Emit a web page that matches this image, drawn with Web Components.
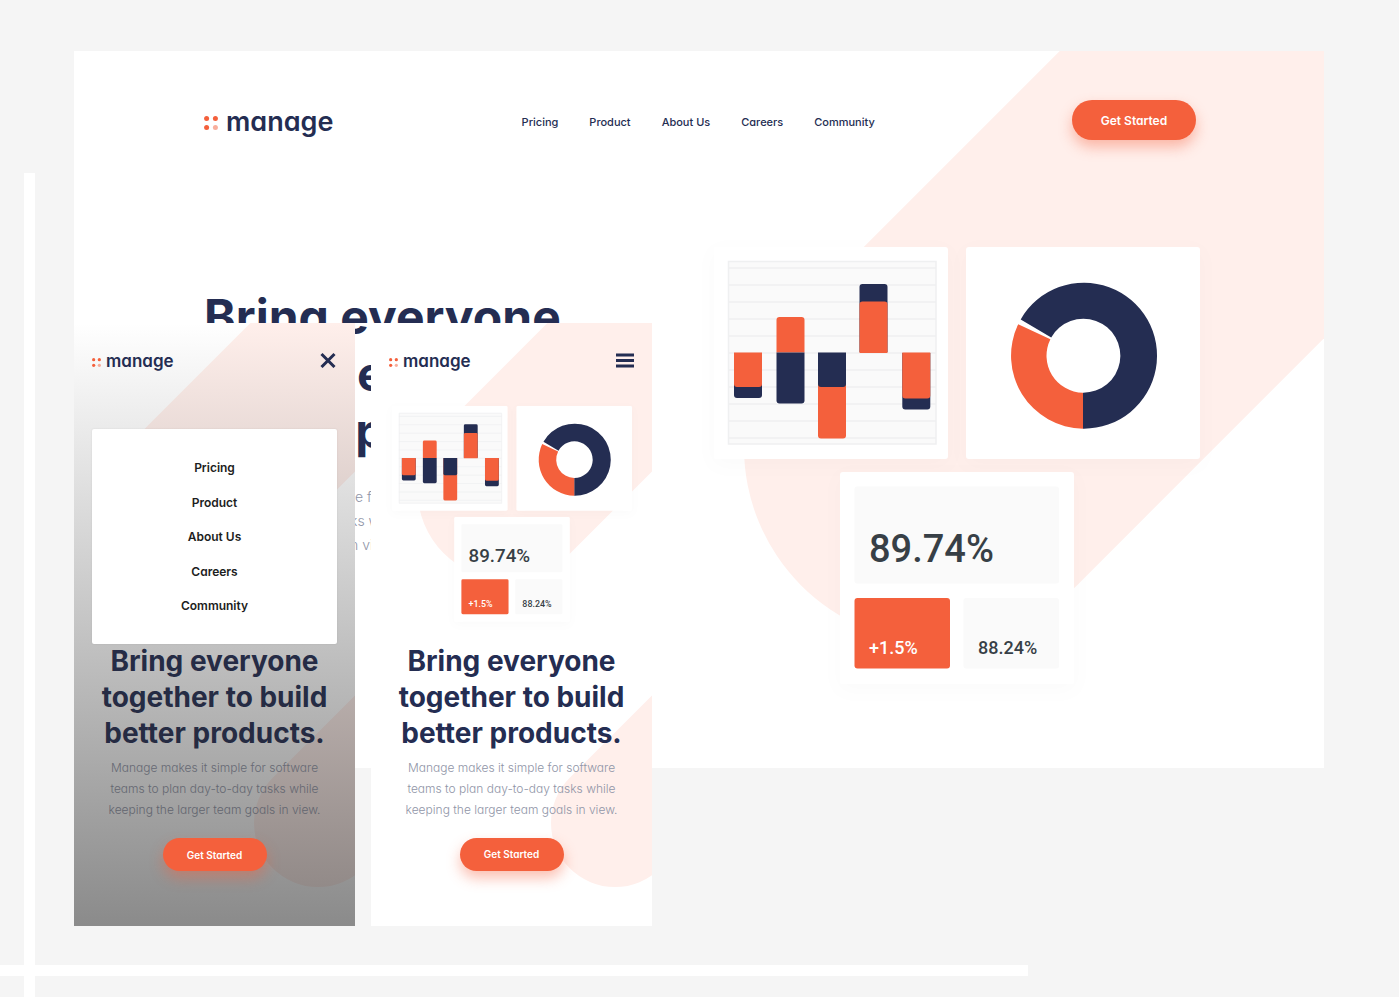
<!DOCTYPE html>
<html lang="en">
<head>
<meta charset="utf-8">
<meta name="viewport" content="width=device-width, initial-scale=1">
<title>Manage landing page showcase</title>
<style>
  body {
    margin: 0;
    background: #f5f5f5;
    color: #242d52;
    font-family: Inter, "Open Sans", sans-serif;
    font-feature-settings: "cv11" 1;
    --orange: #f4603c;
    --navy: #242d52;
    --blush: #ffefeb;
  }
</style>
</head>
<body>
<showcase-stage>
  <desktop-preview slot="desktop">
    <manage-logo></manage-logo>
    <site-nav slot="nav"></site-nav>
    <cta-button slot="action">Get Started</cta-button>
    <span slot="title">Bring everyone together to build better products.</span>
    <span slot="copy">Manage makes it simple for software teams<br>to plan day-to-day tasks while keeping<br>the larger team goals in view.</span>
  </desktop-preview>
  <phone-preview slot="phones" menu>
    <site-nav slot="feature" stacked></site-nav>
    <span slot="title">Bring everyone together to build better products.</span>
    <span slot="copy">Manage makes it simple for software teams to plan day-to-day tasks while keeping the larger team goals in view.</span>
  </phone-preview>
  <phone-preview slot="phones">
    <hero-illustration slot="feature"></hero-illustration>
    <span slot="title">Bring everyone together to build better products.</span>
    <span slot="copy">Manage makes it simple for software teams to plan day-to-day tasks while keeping the larger team goals in view.</span>
  </phone-preview>
</showcase-stage>

<script>
const define = (name, html) => {
  const template = document.createElement('template');
  template.innerHTML = html;
  customElements.define(name, class extends HTMLElement {
    constructor() {
      super();
      this.attachShadow({ mode: 'open' }).append(template.content.cloneNode(true));
    }
  });
};

/* Page backdrop with two white rules; the phones overlap the desktop window. */
define('showcase-stage', `
  <style>
    :host { display: grid; position: relative; isolation: isolate; box-sizing: border-box; min-height: 100vh; padding: 51px 75px 71px 74px; align-items: start; }
    .rule { position: absolute; z-index: -1; background: #fff; }
    .down { left: 24px; top: 173px; bottom: 0; width: 11px; }
    .across { left: 0; right: 371px; bottom: 21px; height: 11px; }
    .desktop, .phones { grid-area: 1 / 1; min-width: 0; }
    .phones { display: flex; gap: 16px; margin-top: 272px; justify-self: start; position: relative; }
  </style>
  <div class="rule down"></div>
  <div class="rule across"></div>
  <div class="desktop"><slot name="desktop"></slot></div>
  <div class="phones"><slot name="phones"></slot></div>`);

/* Wordmark with its four dots; --logo-size sets the text size. */
define('manage-logo', `
  <style>
    :host { display: inline-block; padding-top: 2px; }
    a { display: flex; align-items: center; gap: var(--logo-gap, 8px); color: var(--navy); text-decoration: none; font-size: var(--logo-size, 27px); line-height: 1; font-weight: 600; }
    svg { width: var(--logo-mark, 14px); height: var(--logo-mark, 14px); margin-top: 3px; fill: var(--orange); }
  </style>
  <a href="#" aria-label="manage">
    <svg viewBox="0 0 14 14" aria-hidden="true"><circle cx="2.6" cy="2.6" r="2.5"/><circle cx="11.4" cy="2.6" r="2.5"/><circle cx="2.6" cy="11.4" r="2.5"/><circle cx="11.4" cy="11.4" r="2.5" opacity=".5"/></svg>
    <span>manage</span>
  </a>`);

define('site-nav', `
  <style>
    :host { display: block; }
    ul { display: flex; gap: 31px; margin: 0; padding: 0; list-style: none; font-size: 11px; line-height: 20px; font-weight: 500; }
    a { color: var(--navy); text-decoration: none; }
    :host([stacked]) { background: #fff; border-radius: 2px; padding: 29px 0 28px; box-shadow: 0 0 2px rgba(0, 0, 0, .1); }
    :host([stacked]) ul { flex-direction: column; align-items: center; justify-content: space-between; height: 158px; gap: 0; font-size: 12px; font-weight: 600; }
    :host([stacked]) a { color: #1c1d21; }
  </style>
  <nav aria-label="Main">
    <ul>
      <li><a href="#">Pricing</a></li>
      <li><a href="#">Product</a></li>
      <li><a href="#">About Us</a></li>
      <li><a href="#">Careers</a></li>
      <li><a href="#">Community</a></li>
    </ul>
  </nav>`);

define('cta-button', `
  <style>
    :host { display: inline-block; }
    button { display: block; width: var(--cta-width, 124px); height: var(--cta-height, 40px); padding: 0; border: 0; border-radius: 20px; background: var(--orange); color: #fff; font: inherit; font-feature-settings: inherit; font-size: var(--cta-size, 12px); font-weight: 600; box-shadow: 0 7px 14px rgba(244, 96, 60, .4); cursor: pointer; }
  </style>
  <button type="button"><slot></slot></button>`);

/* Three dashboard cards: bar chart, donut and figures. */
define('hero-illustration', `
  <style>
    :host { display: block; }
    svg { display: block; width: 100%; height: auto; overflow: visible; font-family: Roboto, Inter, sans-serif; font-weight: 500; }
    .card { fill: #fff; filter: drop-shadow(0 5px 10px rgba(0, 0, 0, .02)); }
    .panel { fill: #fafafa; }
    .grid { fill: none; stroke: #eff0f1; stroke-width: 1.5; }
    .o { fill: var(--orange); }
    .n { fill: var(--navy); }
  </style>
  <svg viewBox="0 0 486 437" role="img" aria-label="Dashboard cards">
    <rect class="card" width="234" height="212" rx="3"/>
    <rect class="card" x="252" width="234" height="212" rx="3"/>
    <rect class="card" x="126" y="225" width="234" height="212" rx="3"/>

    <rect class="panel" x="14" y="14" width="208" height="183"/>
    <path class="grid" d="M14.5 14.5h207.500v182.500h-207.500zM14 21h208M14 38h208M14 55h208M14 72h208M14 89h208M14 106h208M14 123h208M14 140h208M14 157h208M14 174h208M14 191h208"/>
    <path class="n" d="M20 106h28v42a3 3 0 0 1-3 3h-22a3 3 0 0 1-3-3z"/>
    <path class="o" d="M20 105.500h28v31.500a3 3 0 0 1-3 3h-22a3 3 0 0 1-3-3z"/>
    <path class="o" d="M62.500 105.500v-32.500a3 3 0 0 1 3-3h22a3 3 0 0 1 3 3v32.500z"/>
    <path class="n" d="M62.500 105.500h28v48a3 3 0 0 1-3 3h-22a3 3 0 0 1-3-3z"/>
    <path class="o" d="M104 106h28v82.500a3 3 0 0 1-3 3h-22a3 3 0 0 1-3-3z"/>
    <path class="n" d="M104 105.500h28v31.500a3 3 0 0 1-3 3h-22a3 3 0 0 1-3-3z"/>
    <path class="n" d="M145.500 105v-65a3 3 0 0 1 3-3h22a3 3 0 0 1 3 3v65z"/>
    <path class="o" d="M145.500 106v-48.500a3 3 0 0 1 3-3h22a3 3 0 0 1 3 3v48.500z"/>
    <path class="n" d="M188.300 106h28v53.500a3 3 0 0 1-3 3h-22a3 3 0 0 1-3-3z"/>
    <path class="o" d="M188.300 105.500h28v43a3 3 0 0 1-3 3h-22a3 3 0 0 1-3-3z"/>

    <g transform="translate(369.700 108.700)">
      <path class="n" d="M-.7 73V37A37 37 0 1 0-32.500-18.300L-63-36.300A73 73 0 1 1-.7 73z"/>
      <path class="o" d="M-.7 73V37A37 37 0 0 1-33.300-16.500L-65.500-31.500A73 73 0 0 0-.7 73z"/>
    </g>

    <rect class="panel" x="140.500" y="239.500" width="204.500" height="97" rx="2.500"/>
    <rect class="o" x="140.500" y="351" width="95.500" height="70.500" rx="3"/>
    <rect class="panel" x="249.500" y="351" width="95.500" height="70.500" rx="2.500"/>
    <text x="155" y="315" font-size="38" fill="#373f46">89.74%</text>
    <text x="155" y="407" font-size="18" fill="#fff">+1.5%</text>
    <text x="264" y="407" font-size="18" fill="#373f46">88.24%</text>
  </svg>`);

define('desktop-preview', `
  <style>
    :host { display: block; position: relative; isolation: isolate; overflow: hidden; background: #fff; }
    .shape { position: absolute; z-index: -1; top: 0; right: 0; width: 580px; height: 717px; }
    header { display: flex; align-items: center; justify-content: space-between; padding: 49px 128px 0 130px; }
    ::slotted(site-nav) { padding: 4px 9px 0 0; }
    main { display: grid; grid-template-columns: minmax(0, 1fr) 486px; align-items: start; padding: 107px 124px 84px 130px; }
    .text { padding-top: 41px; }
    h1 { max-width: 440px; margin: 0; font-size: 48px; line-height: 57px; font-weight: 700; }
    p { margin: 26px 0 0; font-size: 14px; line-height: 24px; font-weight: 300; color: #9095a7; }
  </style>
  <svg class="shape" viewBox="0 0 580 717" aria-hidden="true">
    <path d="M195 396.500l600-600" fill="none" stroke="var(--blush)" stroke-width="390" stroke-linecap="round"/>
  </svg>
  <header><slot></slot><slot name="nav"></slot><slot name="action"></slot></header>
  <main>
    <div class="text">
      <h1><slot name="title"></slot></h1>
      <p><slot name="copy"></slot></p>
    </div>
    <hero-illustration></hero-illustration>
  </main>`);

define('phone-preview', `
  <style>
    :host { display: block; position: relative; isolation: isolate; overflow: hidden; box-sizing: border-box; flex: 0 1 281px; width: 281px; padding: 0 18px 55px; background: #fff; text-align: center;
      --logo-size: 17px; --logo-mark: 9px; --logo-gap: 5px; --cta-width: 104px; --cta-height: 33px; --cta-size: 10px; }
    .shape { position: absolute; z-index: -1; inset: 0; width: 281px; height: 603px; }
    .shade { display: none; position: absolute; inset: 0; background: linear-gradient(rgba(40, 40, 40, 0), rgba(40, 40, 40, .54)); }
    :host([menu]) .shade { display: block; }
    header { display: flex; align-items: center; justify-content: space-between; height: 74px; position: relative; z-index: 1; }
    header button { display: block; padding: 0; border: 0; background: none; line-height: 0; cursor: pointer; }
    header svg { width: 18px; height: 16px; stroke: var(--navy); }
    .close, :host([menu]) .open { display: none; }
    :host([menu]) .close { display: block; }
    .feature { position: relative; z-index: 1; margin: 9px auto 21px; max-width: 240px; }
    :host([menu]) .feature { max-width: none; margin: 32px 0 -1px; }
    h1 { margin: 0 -10px; font-size: 28px; line-height: 36px; font-weight: 700; }
    p { margin: 6px 8px 18px; font-size: 12px; line-height: 21px; font-weight: 300; color: #9095a7; }
    cta-button { position: relative; z-index: 1; vertical-align: top; }
  </style>
  <svg class="shape" viewBox="0 0 281 603" aria-hidden="true">
    <g fill="none" stroke="var(--blush)" stroke-linecap="round">
      <path d="M136 167l300-300" stroke-width="179"/>
      <path d="M244 500l200-200" stroke-width="128"/>
    </g>
  </svg>
  <header>
    <manage-logo></manage-logo>
    <button class="open" type="button" aria-label="Open menu"><svg viewBox="0 0 18 16" aria-hidden="true"><path d="M0 3h18M0 8.500h18M0 14h18" stroke-width="2.900"/></svg></button>
    <button class="close" type="button" aria-label="Close menu"><svg viewBox="0 0 18 16" aria-hidden="true"><path d="M2.500 2l13 13M15.500 2l-13 13" stroke-width="3" fill="none"/></svg></button>
  </header>
  <div class="feature"><slot name="feature"></slot></div>
  <h1><slot name="title"></slot></h1>
  <p><slot name="copy"></slot></p>
  <div class="shade"></div>
  <cta-button>Get Started</cta-button>`);
</script>
</body>
</html>
